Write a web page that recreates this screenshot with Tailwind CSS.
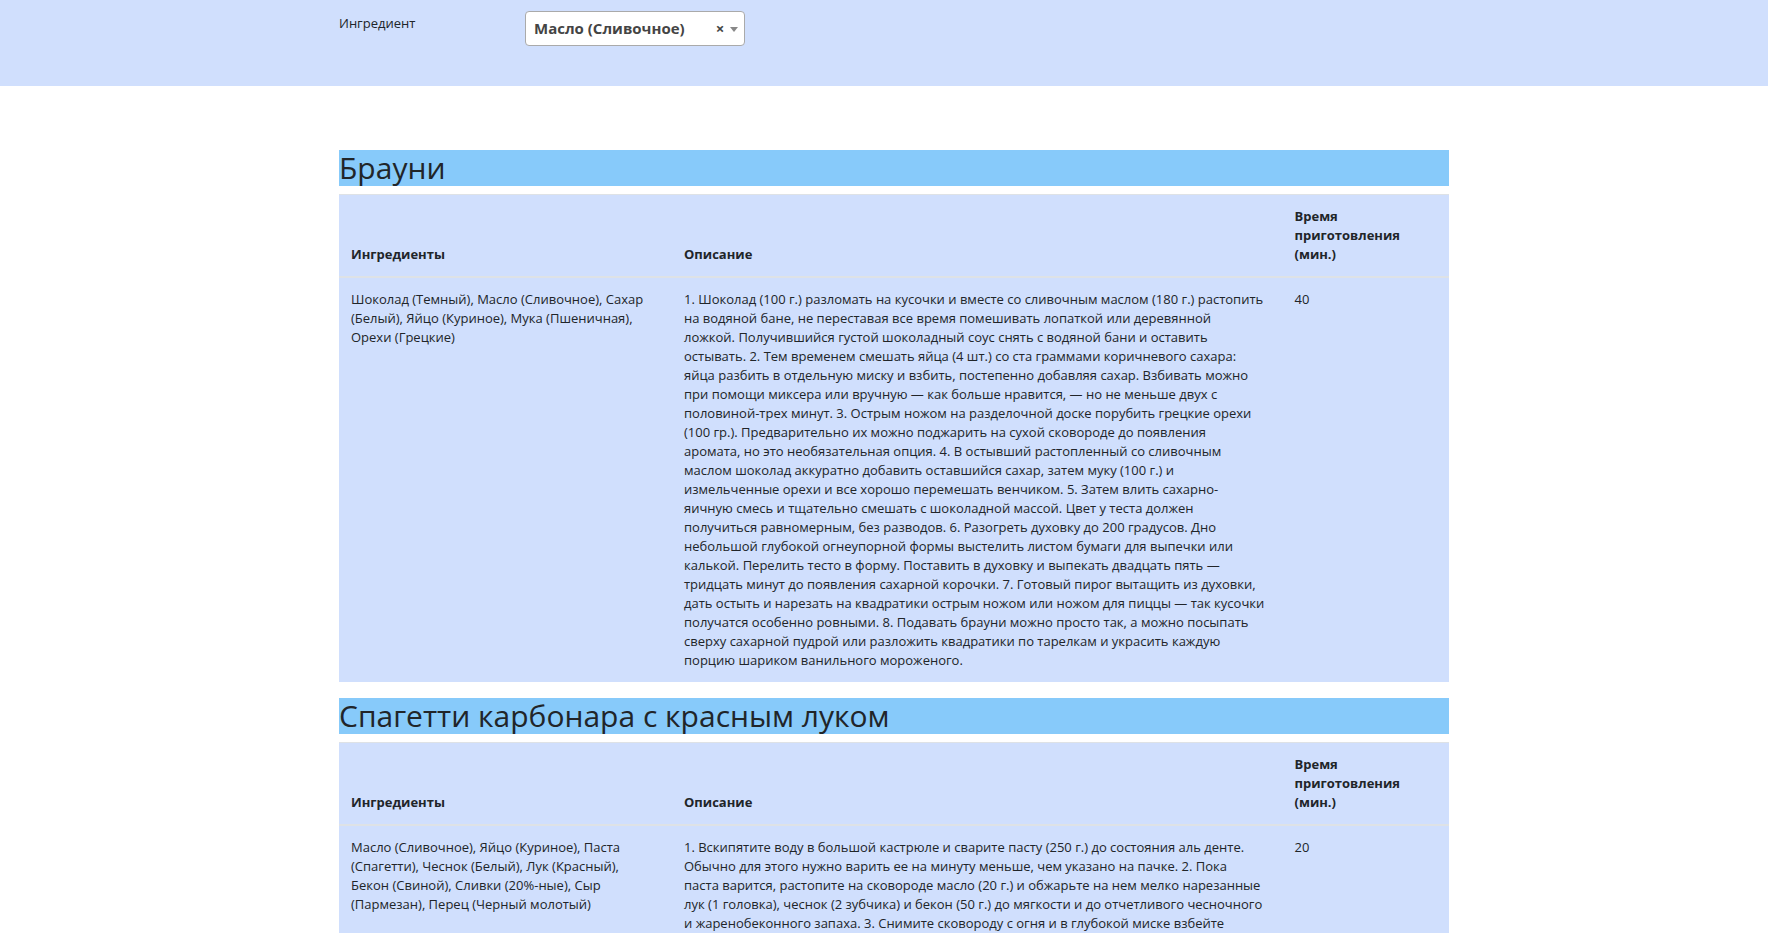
<!DOCTYPE html>
<html lang="ru">
<head>
<meta charset="utf-8">
<meta name="viewport" content="width=device-width, initial-scale=1">
<title>Рецепты</title>
<script src="https://cdn.jsdelivr.net/npm/@tailwindcss/browser@4"></script>
</head>
<body class="bg-white font-['Open_Sans','Noto_Sans',sans-serif] text-[13px] leading-[19px] text-[#212529]">
<form class="bg-[#d0dffd] pt-[11px] pb-10 pl-5">
  <div class="mx-auto flex max-w-[1110px] items-start">
    <label for="ingredient" class="w-[186px] pt-[3px]">Ингредиент</label>
    <div class="relative w-[220px]">
      <select id="ingredient" class="block h-[35px] w-full appearance-none rounded border border-[#aaa] bg-white pr-10 pl-2 text-[15px] font-bold text-[#444]">
        <option>Масло (Сливочное)</option>
      </select>
      <button type="button" aria-label="Очистить" class="absolute top-0 right-5 h-[34px] w-[10px] text-center text-[15px] font-bold text-[#444]">×</button>
      <svg class="pointer-events-none absolute top-4 right-[7px] h-[5px] w-2" viewBox="0 0 8 5" aria-hidden="true"><path d="M0 0h8L4 5z" fill="#888"/></svg>
    </div>
  </div>
</form>
<main class="pt-16 pl-5">
  <div class="mx-auto max-w-[1110px]">
    <section class="mb-4">
      <h2 class="mb-2 bg-[#87cafa] text-[30px] leading-[36px]">Брауни</h2>
      <table class="w-full table-fixed border-separate border-spacing-0 bg-[#d0dffd] text-left">
        <thead>
          <tr>
            <th class="w-[30%] border-t border-b-2 border-[#dee2e6] p-3 align-bottom font-bold">Ингредиенты</th>
            <th class="w-[55%] border-t border-b-2 border-[#dee2e6] p-3 align-bottom font-bold">Описание</th>
            <th class="w-[15%] border-t border-b-2 border-[#dee2e6] p-3 align-bottom font-bold">Время приготовления (мин.)</th>
          </tr>
        </thead>
        <tbody>
          <tr>
            <td class="p-3 align-top">Шоколад (Темный), Масло (Сливочное), Сахар (Белый), Яйцо (Куриное), Мука (Пшеничная), Орехи (Грецкие)</td>
            <td class="p-3 align-top">1. Шоколад (100 г.) разломать на кусочки и вместе со сливочным маслом (180 г.) растопить<br>
              на водяной бане, не переставая все время помешивать лопаткой или деревянной<br>
              ложкой. Получившийся густой шоколадный соус снять с водяной бани и оставить<br>
              остывать. 2. Тем временем смешать яйца (4 шт.) со ста граммами коричневого сахара:<br>
              яйца разбить в отдельную миску и взбить, постепенно добавляя сахар. Взбивать можно<br>
              при помощи миксера или вручную — как больше нравится, — но не меньше двух с<br>
              половиной-трех минут. 3. Острым ножом на разделочной доске порубить грецкие орехи<br>
              (100 гр.). Предварительно их можно поджарить на сухой сковороде до появления<br>
              аромата, но это необязательная опция. 4. В остывший растопленный со сливочным<br>
              маслом шоколад аккуратно добавить оставшийся сахар, затем муку (100 г.) и<br>
              измельченные орехи и все хорошо перемешать венчиком. 5. Затем влить сахарно-<br>
              яичную смесь и тщательно смешать с шоколадной массой. Цвет у теста должен<br>
              получиться равномерным, без разводов. 6. Разогреть духовку до 200 градусов. Дно<br>
              небольшой глубокой огнеупорной формы выстелить листом бумаги для выпечки или<br>
              калькой. Перелить тесто в форму. Поставить в духовку и выпекать двадцать пять —<br>
              тридцать минут до появления сахарной корочки. 7. Готовый пирог вытащить из духовки,<br>
              дать остыть и нарезать на квадратики острым ножом или ножом для пиццы — так кусочки<br>
              получатся особенно ровными. 8. Подавать брауни можно просто так, а можно посыпать<br>
              сверху сахарной пудрой или разложить квадратики по тарелкам и украсить каждую<br>
              порцию шариком ванильного мороженого.</td>
            <td class="p-3 align-top">40</td>
          </tr>
        </tbody>
      </table>
    </section>
    <section>
      <h2 class="mb-2 bg-[#87cafa] text-[30px] leading-[36px]">Спагетти карбонара с красным луком</h2>
      <table class="w-full table-fixed border-separate border-spacing-0 bg-[#d0dffd] text-left">
        <thead>
          <tr>
            <th class="w-[30%] border-t border-b-2 border-[#dee2e6] p-3 align-bottom font-bold">Ингредиенты</th>
            <th class="w-[55%] border-t border-b-2 border-[#dee2e6] p-3 align-bottom font-bold">Описание</th>
            <th class="w-[15%] border-t border-b-2 border-[#dee2e6] p-3 align-bottom font-bold">Время приготовления (мин.)</th>
          </tr>
        </thead>
        <tbody>
          <tr>
            <td class="p-3 align-top">Масло (Сливочное), Яйцо (Куриное), Паста (Спагетти), Чеснок (Белый), Лук (Красный), Бекон (Свиной), Сливки (20%-ные), Сыр (Пармезан), Перец (Черный молотый)</td>
            <td class="p-3 align-top">1. Вскипятите воду в большой кастрюле и сварите пасту (250 г.) до состояния аль денте.<br>
              Обычно для этого нужно варить ее на минуту меньше, чем указано на пачке. 2. Пока<br>
              паста варится, растопите на сковороде масло (20 г.) и обжарьте на нем мелко нарезанные<br>
              лук (1 головка), чеснок (2 зубчика) и бекон (50 г.) до мягкости и до отчетливого чесночного<br>
              и жаренобеконного запаха. 3. Снимите сковороду с огня и в глубокой миске взбейте</td>
            <td class="p-3 align-top">20</td>
          </tr>
        </tbody>
      </table>
    </section>
  </div>
</main>
</body>
</html>
